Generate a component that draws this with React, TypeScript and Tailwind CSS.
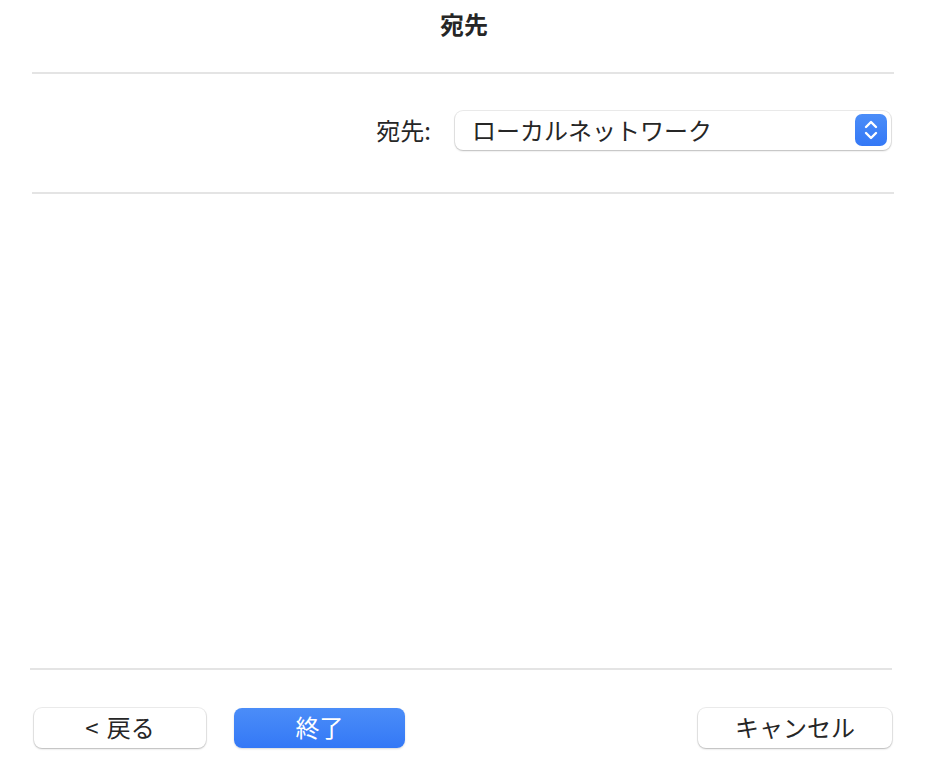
import React from "react";

const font = { fontFamily: '"Noto Sans CJK JP", "Noto Sans", sans-serif' };

function Stepper() {
  return (
    <div className="flex h-[32px] w-[32px] items-center justify-center rounded-[7px] bg-gradient-to-b from-[#4b8df8] to-[#3478f6]">
      <svg width="18" height="24" viewBox="0 0 18 24" fill="none">
        <path d="M4 9 L9 4 L14 9" stroke="white" strokeWidth="2.4" strokeLinecap="round" strokeLinejoin="round" />
        <path d="M4 15 L9 20 L14 15" stroke="white" strokeWidth="2.4" strokeLinecap="round" strokeLinejoin="round" />
      </svg>
    </div>
  );
}

export default function App() {
  return (
    <div className="flex h-[780px] w-[928px] flex-col bg-white text-[#262626]" style={font}>
      {/* Title */}
      <div className="flex h-[72px] justify-center pt-[9px]">
        <h1 className="text-[24px] font-bold leading-[30px]">宛先</h1>
      </div>
      <div className="ml-[32px] h-[2px] w-[862px] bg-[#e4e4e4]" />

      {/* Destination row */}
      <div className="flex h-[118px] items-center justify-end pr-[37px] pb-[6px]">
        <span className="mr-[24px] text-[24px] leading-none">宛先:</span>
        <div className="flex h-[39px] w-[436px] items-center justify-between rounded-[8px] bg-white pl-[17px] pr-[4px] shadow-[0_0_0_1px_rgba(0,0,0,0.08),0_1px_2px_rgba(0,0,0,0.2)]">
          <span className="text-[24px] leading-none">ローカルネットワーク</span>
          <Stepper />
        </div>
      </div>
      <div className="ml-[32px] h-[2px] w-[862px] bg-[#e4e4e4]" />

      <div className="flex-1" />

      <div className="ml-[30px] h-[2px] w-[862px] bg-[#e4e4e4]" />

      {/* Buttons */}
      <div className="flex items-start pt-[38px] pb-[32px] pl-[34px] pr-[36px]">
        <button className="flex h-[40px] w-[172px] items-center justify-center rounded-[8px] bg-white pb-[3px] text-[24px] leading-none shadow-[0_0_0_1px_rgba(0,0,0,0.07),0_1px_2px_rgba(0,0,0,0.22)]">
          <span className="mr-[8px]">&lt;</span>戻る
        </button>
        <button className="ml-[28px] flex h-[40px] w-[171px] items-center justify-center rounded-[8px] bg-gradient-to-b from-[#4b8df8] to-[#3478f6] pb-[3px] text-[24px] leading-none text-white shadow-[0_1px_2px_rgba(0,0,0,0.15)]">
          終了
        </button>
        <div className="flex-1" />
        <button className="flex h-[40px] w-[194px] items-center justify-center rounded-[8px] bg-white pb-[3px] text-[24px] leading-none shadow-[0_0_0_1px_rgba(0,0,0,0.07),0_1px_2px_rgba(0,0,0,0.22)]">
          キャンセル
        </button>
      </div>
    </div>
  );
}
